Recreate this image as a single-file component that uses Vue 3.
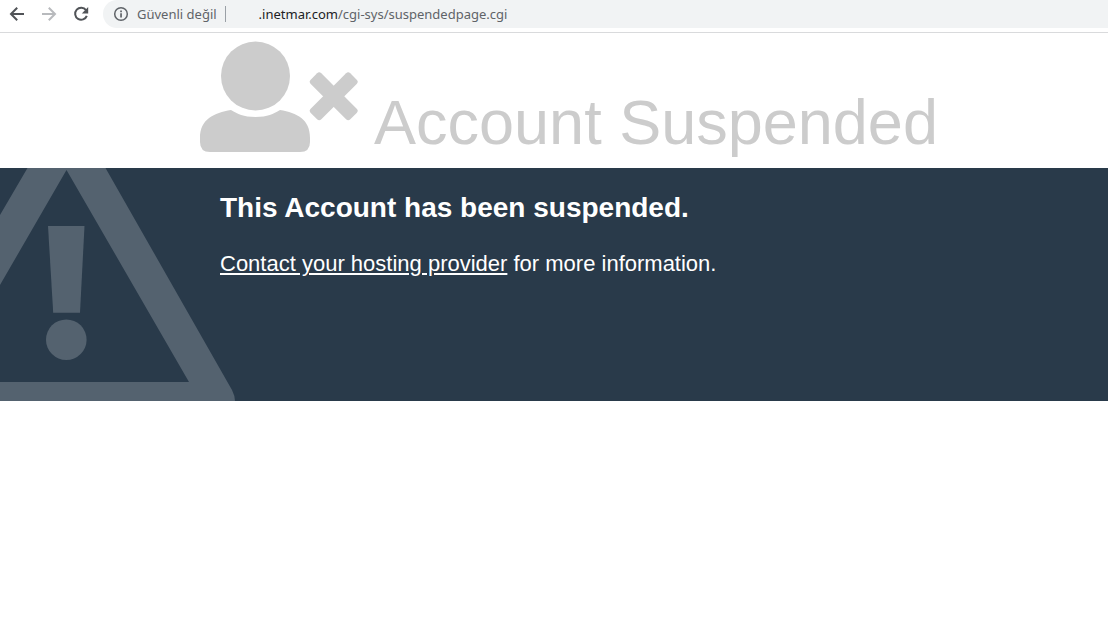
<script setup>
const address = { host: '.inetmar.com', path: '/cgi-sys/suspendedpage.cgi' }
</script>

<template>
  <div class="page">
    <nav class="toolbar" aria-label="Browser">
      <button class="nav-button" type="button" aria-label="Back">
        <svg width="16" height="16" viewBox="0 0 16 16"><path d="M15 8H2.4M8.2 1.8 2 8l6.2 6.2" /></svg>
      </button>
      <button class="nav-button" type="button" aria-label="Forward" disabled>
        <svg width="16" height="16" viewBox="0 0 16 16"><path d="M1 8h12.6M7.8 1.8 14 8l-6.2 6.2" /></svg>
      </button>
      <button class="nav-button" type="button" aria-label="Reload">
        <svg width="16" height="16" viewBox="0 0 16 16">
          <path d="M13 4.2A6 6 0 1 0 13.8 9.8" />
          <path class="solid" d="M15.2 1v6.4H8.8z" />
        </svg>
      </button>
      <div class="address">
        <button class="security" type="button">
          <svg width="16" height="16" viewBox="0 0 16 16">
            <circle cx="8" cy="8" r="6.3" />
            <path class="solid" d="M7.2 7.2h1.7v4.2H7.2zM7.2 4.5h1.7v1.7H7.2z" />
          </svg>
          <span>Güvenli değil</span>
        </button>
        <span class="url"><span class="host">{{ address.host }}</span>{{ address.path }}</span>
      </div>
    </nav>

    <header class="heading">
      <svg class="user" width="158" height="112" viewBox="0 0 158 112" aria-hidden="true">
        <circle cx="55.5" cy="36" r="34.5" />
        <path d="M31 70C38 74 43 77 55.5 77S73 74 80 70C97 73 110 79 110 98V102Q110 112 100 112H10Q0 112 0 102V98C0 79 14 73 31 70Z" />
        <g transform="translate(133.7 56.3) rotate(45)">
          <rect x="-28" y="-7.5" width="56" height="15" rx="3" />
          <rect x="-7.5" y="-28" width="15" height="56" rx="3" />
        </g>
      </svg>
      <h1>Account Suspended</h1>
    </header>

    <main class="notice">
      <svg class="warning" width="236" height="233" viewBox="0 0 236 233" aria-hidden="true">
        <path fill-rule="evenodd" d="M27.5 0H105.5L232 222Q235 228 235 233H0V214H189L66.5 2 0 117V47Z" />
        <path d="M48 58H84.5L80 144.7H53.2Z" />
        <circle cx="66.3" cy="171.7" r="20.3" />
      </svg>
      <h2>This Account has been suspended.</h2>
      <p><a href="#contact">Contact your hosting provider</a> for more information.</p>
    </main>
  </div>
</template>

<style>
body {
  background: #fff;
}
</style>

<style scoped>
.page {
  font-family: "Liberation Sans", Arial, sans-serif;
}

.toolbar {
  display: flex;
  height: 32px;
  padding-left: 9px;
  border-bottom: 1px solid #d9dadc;
  font: 13px/28px "Noto Sans", sans-serif;
  color: #5f6368;
}

.nav-button,
.security {
  display: flex;
  align-items: center;
  height: 28px;
  padding: 0;
  border: 0;
  background: none;
  color: inherit;
  font: inherit;
}

.nav-button {
  width: 16px;
  margin-right: 16px;
  color: #505357;
}

.nav-button:disabled {
  color: #b8babd;
}

.toolbar svg {
  flex: none;
  fill: none;
  stroke: currentColor;
  stroke-width: 2;
}

.security svg {
  stroke-width: 1.5;
}

.toolbar .solid {
  fill: currentColor;
  stroke: none;
}

.address {
  display: flex;
  flex: 1;
  align-items: center;
  height: 28px;
  margin-left: -2px;
  padding-left: 10px;
  border-radius: 14px 0 0 14px;
  background: #f1f3f4;
}

.security {
  gap: 8px;
  white-space: nowrap;
}

.security::after {
  width: 1px;
  height: 16px;
  background: #9aa0a6;
  content: "";
}

.url {
  margin-left: 33px;
  white-space: nowrap;
}

.host {
  color: #202124;
}

.heading {
  display: flex;
  align-items: flex-end;
  gap: 16px;
  padding: 7px 16px 16px 200px;
  color: #ccc;
}

.user {
  flex: none;
  fill: currentColor;
}

h1 {
  margin: 0;
  font-size: 63px;
  font-weight: 400;
  line-height: 60px;
}

.notice {
  position: relative;
  min-height: 186px;
  padding: 24px 16px 23px 220px;
  background: #293a4a;
  color: #fff;
}

.warning {
  position: absolute;
  top: 0;
  left: 0;
  fill: #54626f;
}

h2 {
  margin: 0 0 24px;
  font-size: 28px;
  line-height: 32px;
}

p {
  margin: 0;
  font-size: 22px;
  line-height: 32px;
}

a {
  color: inherit;
}
</style>
